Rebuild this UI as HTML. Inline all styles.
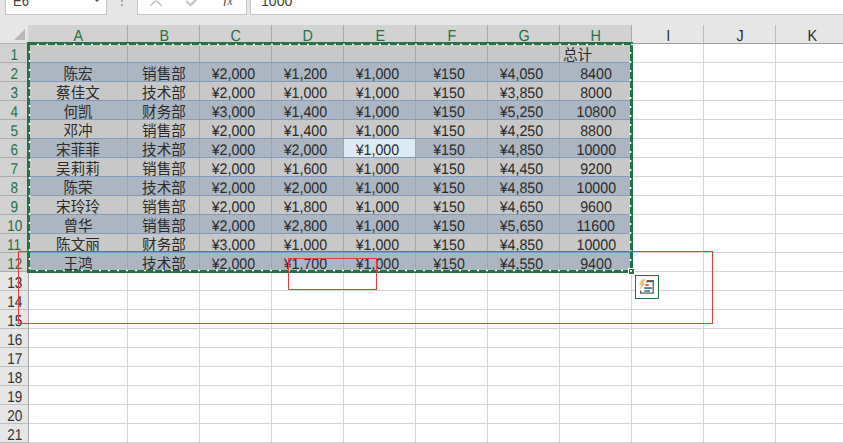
<!DOCTYPE html>
<html lang="zh"><head><meta charset="utf-8"><title>Excel</title>
<style>
html,body{margin:0;padding:0}
body{width:843px;height:443px;overflow:hidden;position:relative;background:#fff;font-family:"Liberation Sans","Noto Sans CJK SC",sans-serif;color:#222}
div{position:absolute;box-sizing:border-box}
.top{left:0;top:0;width:843px;height:25px;background:#e6e6e6}
.box{background:#fff;border:1px solid #c4c4c4;border-top:none}
.ch{top:25px;height:19px;background:#e6e6e6;border-right:1px solid #bdbdbd;border-bottom:1px solid #9f9f9f;text-align:center;font-size:16px;line-height:23px;padding-left:1px;color:#2e2e2e;text-rendering:geometricPrecision;overflow:hidden}
.ch.s{background:#d2d2d2;color:#217346;border-right-color:#ababab}
.rh{left:0;width:29px;height:19px;padding-left:1px;background:#e6e6e6;border-bottom:1px solid #bdbdbd;border-right:1px solid #a6a6a6;text-align:center;font-size:15.6px;line-height:23.5px;color:#333;overflow:hidden;text-rendering:geometricPrecision}
.rh.s{background:#d2d2d2;color:#217346;border-bottom-color:#ababab}
.c{height:19px;text-align:center;font-size:14.6px;line-height:23.5px;white-space:nowrap;overflow:hidden;color:#2b2b2b}
.c.num{line-height:23.5px}
.n{display:inline-block;font-size:15.3px;transform:scaleX(.93);text-rendering:geometricPrecision}
.ch span,.rh span{display:inline-block}
.ch span{transform:scaleX(.9)}
.rh span{transform:scaleX(.87)}
.gv{top:44px;width:1px;height:399px;background:#d4d4d4}
.gh{left:28px;height:1px;width:815px;background:#d4d4d4}
</style></head><body>

<div class="gv" style="left:127px"></div>
<div class="gv" style="left:199px"></div>
<div class="gv" style="left:271px"></div>
<div class="gv" style="left:343px"></div>
<div class="gv" style="left:415px"></div>
<div class="gv" style="left:487px"></div>
<div class="gv" style="left:559px"></div>
<div class="gv" style="left:631px"></div>
<div class="gv" style="left:703px"></div>
<div class="gv" style="left:775px"></div>
<div class="gh" style="top:62px"></div>
<div class="gh" style="top:81px"></div>
<div class="gh" style="top:100px"></div>
<div class="gh" style="top:119px"></div>
<div class="gh" style="top:138px"></div>
<div class="gh" style="top:157px"></div>
<div class="gh" style="top:176px"></div>
<div class="gh" style="top:195px"></div>
<div class="gh" style="top:214px"></div>
<div class="gh" style="top:233px"></div>
<div class="gh" style="top:252px"></div>
<div class="gh" style="top:271px"></div>
<div class="gh" style="top:290px"></div>
<div class="gh" style="top:309px"></div>
<div class="gh" style="top:328px"></div>
<div class="gh" style="top:347px"></div>
<div class="gh" style="top:366px"></div>
<div class="gh" style="top:385px"></div>
<div class="gh" style="top:404px"></div>
<div class="gh" style="top:423px"></div>
<div class="gh" style="top:442px"></div>
<div class="gh" style="top:461px"></div>
<div style="left:28px;top:44px;width:604px;height:19px;background:#c8c8c8"></div>
<div style="left:28px;top:63px;width:604px;height:19px;background:#abb6c2"></div>
<div style="left:28px;top:82px;width:604px;height:19px;background:#c8c8c8"></div>
<div style="left:28px;top:101px;width:604px;height:19px;background:#abb6c2"></div>
<div style="left:28px;top:120px;width:604px;height:19px;background:#c8c8c8"></div>
<div style="left:28px;top:139px;width:604px;height:19px;background:#abb6c2"></div>
<div style="left:28px;top:158px;width:604px;height:19px;background:#c8c8c8"></div>
<div style="left:28px;top:177px;width:604px;height:19px;background:#abb6c2"></div>
<div style="left:28px;top:196px;width:604px;height:19px;background:#c8c8c8"></div>
<div style="left:28px;top:215px;width:604px;height:19px;background:#abb6c2"></div>
<div style="left:28px;top:234px;width:604px;height:19px;background:#c8c8c8"></div>
<div style="left:28px;top:253px;width:604px;height:19px;background:#abb6c2"></div>
<div class="c" style="left:28px;top:44px;width:100px;"></div>
<div class="c" style="left:128px;top:44px;width:72px;"></div>
<div class="c" style="left:200px;top:44px;width:72px;"></div>
<div class="c" style="left:272px;top:44px;width:72px;"></div>
<div class="c" style="left:344px;top:44px;width:72px;"></div>
<div class="c" style="left:416px;top:44px;width:72px;"></div>
<div class="c" style="left:488px;top:44px;width:72px;"></div>
<div class="c" style="left:560px;top:44px;width:72px;text-align:left;padding-left:3px;">总计</div>
<div class="c" style="left:28px;top:63px;width:100px;">陈宏</div>
<div class="c" style="left:128px;top:63px;width:72px;">销售部</div>
<div class="c num" style="left:200px;top:63px;width:72px;padding-right:6px;"><span class="n">¥2,000</span></div>
<div class="c num" style="left:272px;top:63px;width:72px;padding-right:6px;"><span class="n">¥1,200</span></div>
<div class="c num" style="left:344px;top:63px;width:72px;padding-right:6px;"><span class="n">¥1,000</span></div>
<div class="c num" style="left:416px;top:63px;width:72px;padding-right:6px;"><span class="n">¥150</span></div>
<div class="c num" style="left:488px;top:63px;width:72px;padding-right:6px;"><span class="n">¥4,050</span></div>
<div class="c num" style="left:560px;top:63px;width:72px;"><span class="n">8400</span></div>
<div class="c" style="left:28px;top:82px;width:100px;">蔡佳文</div>
<div class="c" style="left:128px;top:82px;width:72px;">技术部</div>
<div class="c num" style="left:200px;top:82px;width:72px;padding-right:6px;"><span class="n">¥2,000</span></div>
<div class="c num" style="left:272px;top:82px;width:72px;padding-right:6px;"><span class="n">¥1,000</span></div>
<div class="c num" style="left:344px;top:82px;width:72px;padding-right:6px;"><span class="n">¥1,000</span></div>
<div class="c num" style="left:416px;top:82px;width:72px;padding-right:6px;"><span class="n">¥150</span></div>
<div class="c num" style="left:488px;top:82px;width:72px;padding-right:6px;"><span class="n">¥3,850</span></div>
<div class="c num" style="left:560px;top:82px;width:72px;"><span class="n">8000</span></div>
<div class="c" style="left:28px;top:101px;width:100px;">何凯</div>
<div class="c" style="left:128px;top:101px;width:72px;">财务部</div>
<div class="c num" style="left:200px;top:101px;width:72px;padding-right:6px;"><span class="n">¥3,000</span></div>
<div class="c num" style="left:272px;top:101px;width:72px;padding-right:6px;"><span class="n">¥1,400</span></div>
<div class="c num" style="left:344px;top:101px;width:72px;padding-right:6px;"><span class="n">¥1,000</span></div>
<div class="c num" style="left:416px;top:101px;width:72px;padding-right:6px;"><span class="n">¥150</span></div>
<div class="c num" style="left:488px;top:101px;width:72px;padding-right:6px;"><span class="n">¥5,250</span></div>
<div class="c num" style="left:560px;top:101px;width:72px;"><span class="n">10800</span></div>
<div class="c" style="left:28px;top:120px;width:100px;">邓冲</div>
<div class="c" style="left:128px;top:120px;width:72px;">销售部</div>
<div class="c num" style="left:200px;top:120px;width:72px;padding-right:6px;"><span class="n">¥2,000</span></div>
<div class="c num" style="left:272px;top:120px;width:72px;padding-right:6px;"><span class="n">¥1,400</span></div>
<div class="c num" style="left:344px;top:120px;width:72px;padding-right:6px;"><span class="n">¥1,000</span></div>
<div class="c num" style="left:416px;top:120px;width:72px;padding-right:6px;"><span class="n">¥150</span></div>
<div class="c num" style="left:488px;top:120px;width:72px;padding-right:6px;"><span class="n">¥4,250</span></div>
<div class="c num" style="left:560px;top:120px;width:72px;"><span class="n">8800</span></div>
<div class="c" style="left:28px;top:139px;width:100px;">宋菲菲</div>
<div class="c" style="left:128px;top:139px;width:72px;">技术部</div>
<div class="c num" style="left:200px;top:139px;width:72px;padding-right:6px;"><span class="n">¥2,000</span></div>
<div class="c num" style="left:272px;top:139px;width:72px;padding-right:6px;"><span class="n">¥2,000</span></div>
<div class="c num" style="left:344px;top:139px;width:72px;background:#ddebf7;padding-right:6px;"><span class="n">¥1,000</span></div>
<div class="c num" style="left:416px;top:139px;width:72px;padding-right:6px;"><span class="n">¥150</span></div>
<div class="c num" style="left:488px;top:139px;width:72px;padding-right:6px;"><span class="n">¥4,850</span></div>
<div class="c num" style="left:560px;top:139px;width:72px;"><span class="n">10000</span></div>
<div class="c" style="left:28px;top:158px;width:100px;">吴莉莉</div>
<div class="c" style="left:128px;top:158px;width:72px;">销售部</div>
<div class="c num" style="left:200px;top:158px;width:72px;padding-right:6px;"><span class="n">¥2,000</span></div>
<div class="c num" style="left:272px;top:158px;width:72px;padding-right:6px;"><span class="n">¥1,600</span></div>
<div class="c num" style="left:344px;top:158px;width:72px;padding-right:6px;"><span class="n">¥1,000</span></div>
<div class="c num" style="left:416px;top:158px;width:72px;padding-right:6px;"><span class="n">¥150</span></div>
<div class="c num" style="left:488px;top:158px;width:72px;padding-right:6px;"><span class="n">¥4,450</span></div>
<div class="c num" style="left:560px;top:158px;width:72px;"><span class="n">9200</span></div>
<div class="c" style="left:28px;top:177px;width:100px;">陈荣</div>
<div class="c" style="left:128px;top:177px;width:72px;">技术部</div>
<div class="c num" style="left:200px;top:177px;width:72px;padding-right:6px;"><span class="n">¥2,000</span></div>
<div class="c num" style="left:272px;top:177px;width:72px;padding-right:6px;"><span class="n">¥2,000</span></div>
<div class="c num" style="left:344px;top:177px;width:72px;padding-right:6px;"><span class="n">¥1,000</span></div>
<div class="c num" style="left:416px;top:177px;width:72px;padding-right:6px;"><span class="n">¥150</span></div>
<div class="c num" style="left:488px;top:177px;width:72px;padding-right:6px;"><span class="n">¥4,850</span></div>
<div class="c num" style="left:560px;top:177px;width:72px;"><span class="n">10000</span></div>
<div class="c" style="left:28px;top:196px;width:100px;">宋玲玲</div>
<div class="c" style="left:128px;top:196px;width:72px;">销售部</div>
<div class="c num" style="left:200px;top:196px;width:72px;padding-right:6px;"><span class="n">¥2,000</span></div>
<div class="c num" style="left:272px;top:196px;width:72px;padding-right:6px;"><span class="n">¥1,800</span></div>
<div class="c num" style="left:344px;top:196px;width:72px;padding-right:6px;"><span class="n">¥1,000</span></div>
<div class="c num" style="left:416px;top:196px;width:72px;padding-right:6px;"><span class="n">¥150</span></div>
<div class="c num" style="left:488px;top:196px;width:72px;padding-right:6px;"><span class="n">¥4,650</span></div>
<div class="c num" style="left:560px;top:196px;width:72px;"><span class="n">9600</span></div>
<div class="c" style="left:28px;top:215px;width:100px;">曾华</div>
<div class="c" style="left:128px;top:215px;width:72px;">销售部</div>
<div class="c num" style="left:200px;top:215px;width:72px;padding-right:6px;"><span class="n">¥2,000</span></div>
<div class="c num" style="left:272px;top:215px;width:72px;padding-right:6px;"><span class="n">¥2,800</span></div>
<div class="c num" style="left:344px;top:215px;width:72px;padding-right:6px;"><span class="n">¥1,000</span></div>
<div class="c num" style="left:416px;top:215px;width:72px;padding-right:6px;"><span class="n">¥150</span></div>
<div class="c num" style="left:488px;top:215px;width:72px;padding-right:6px;"><span class="n">¥5,650</span></div>
<div class="c num" style="left:560px;top:215px;width:72px;"><span class="n">11600</span></div>
<div class="c" style="left:28px;top:234px;width:100px;">陈文丽</div>
<div class="c" style="left:128px;top:234px;width:72px;">财务部</div>
<div class="c num" style="left:200px;top:234px;width:72px;padding-right:6px;"><span class="n">¥3,000</span></div>
<div class="c num" style="left:272px;top:234px;width:72px;padding-right:6px;"><span class="n">¥1,000</span></div>
<div class="c num" style="left:344px;top:234px;width:72px;padding-right:6px;"><span class="n">¥1,000</span></div>
<div class="c num" style="left:416px;top:234px;width:72px;padding-right:6px;"><span class="n">¥150</span></div>
<div class="c num" style="left:488px;top:234px;width:72px;padding-right:6px;"><span class="n">¥4,850</span></div>
<div class="c num" style="left:560px;top:234px;width:72px;"><span class="n">10000</span></div>
<div class="c" style="left:28px;top:253px;width:100px;">王鸿</div>
<div class="c" style="left:128px;top:253px;width:72px;">技术部</div>
<div class="c num" style="left:200px;top:253px;width:72px;padding-right:6px;"><span class="n">¥2,000</span></div>
<div class="c num" style="left:272px;top:253px;width:72px;padding-right:6px;"><span class="n">¥1,700</span></div>
<div class="c num" style="left:344px;top:253px;width:72px;padding-right:6px;"><span class="n">¥1,000</span></div>
<div class="c num" style="left:416px;top:253px;width:72px;padding-right:6px;"><span class="n">¥150</span></div>
<div class="c num" style="left:488px;top:253px;width:72px;padding-right:6px;"><span class="n">¥4,550</span></div>
<div class="c num" style="left:560px;top:253px;width:72px;"><span class="n">9400</span></div>
<div style="left:127px;top:44px;width:1px;height:228px;background:#a8a8a8"></div>
<div style="left:127px;top:63px;width:1px;height:19px;background:#93a6c2"></div>
<div style="left:127px;top:101px;width:1px;height:19px;background:#93a6c2"></div>
<div style="left:127px;top:139px;width:1px;height:19px;background:#93a6c2"></div>
<div style="left:127px;top:177px;width:1px;height:19px;background:#93a6c2"></div>
<div style="left:127px;top:215px;width:1px;height:19px;background:#93a6c2"></div>
<div style="left:127px;top:253px;width:1px;height:19px;background:#93a6c2"></div>
<div style="left:199px;top:44px;width:1px;height:228px;background:#a8a8a8"></div>
<div style="left:199px;top:63px;width:1px;height:19px;background:#93a6c2"></div>
<div style="left:199px;top:101px;width:1px;height:19px;background:#93a6c2"></div>
<div style="left:199px;top:139px;width:1px;height:19px;background:#93a6c2"></div>
<div style="left:199px;top:177px;width:1px;height:19px;background:#93a6c2"></div>
<div style="left:199px;top:215px;width:1px;height:19px;background:#93a6c2"></div>
<div style="left:199px;top:253px;width:1px;height:19px;background:#93a6c2"></div>
<div style="left:271px;top:44px;width:1px;height:228px;background:#a8a8a8"></div>
<div style="left:271px;top:63px;width:1px;height:19px;background:#93a6c2"></div>
<div style="left:271px;top:101px;width:1px;height:19px;background:#93a6c2"></div>
<div style="left:271px;top:139px;width:1px;height:19px;background:#93a6c2"></div>
<div style="left:271px;top:177px;width:1px;height:19px;background:#93a6c2"></div>
<div style="left:271px;top:215px;width:1px;height:19px;background:#93a6c2"></div>
<div style="left:271px;top:253px;width:1px;height:19px;background:#93a6c2"></div>
<div style="left:343px;top:44px;width:1px;height:228px;background:#a8a8a8"></div>
<div style="left:343px;top:63px;width:1px;height:19px;background:#93a6c2"></div>
<div style="left:343px;top:101px;width:1px;height:19px;background:#93a6c2"></div>
<div style="left:343px;top:139px;width:1px;height:19px;background:#93a6c2"></div>
<div style="left:343px;top:177px;width:1px;height:19px;background:#93a6c2"></div>
<div style="left:343px;top:215px;width:1px;height:19px;background:#93a6c2"></div>
<div style="left:343px;top:253px;width:1px;height:19px;background:#93a6c2"></div>
<div style="left:415px;top:44px;width:1px;height:228px;background:#a8a8a8"></div>
<div style="left:415px;top:63px;width:1px;height:19px;background:#93a6c2"></div>
<div style="left:415px;top:101px;width:1px;height:19px;background:#93a6c2"></div>
<div style="left:415px;top:139px;width:1px;height:19px;background:#93a6c2"></div>
<div style="left:415px;top:177px;width:1px;height:19px;background:#93a6c2"></div>
<div style="left:415px;top:215px;width:1px;height:19px;background:#93a6c2"></div>
<div style="left:415px;top:253px;width:1px;height:19px;background:#93a6c2"></div>
<div style="left:487px;top:44px;width:1px;height:228px;background:#a8a8a8"></div>
<div style="left:487px;top:63px;width:1px;height:19px;background:#93a6c2"></div>
<div style="left:487px;top:101px;width:1px;height:19px;background:#93a6c2"></div>
<div style="left:487px;top:139px;width:1px;height:19px;background:#93a6c2"></div>
<div style="left:487px;top:177px;width:1px;height:19px;background:#93a6c2"></div>
<div style="left:487px;top:215px;width:1px;height:19px;background:#93a6c2"></div>
<div style="left:487px;top:253px;width:1px;height:19px;background:#93a6c2"></div>
<div style="left:559px;top:44px;width:1px;height:228px;background:#a8a8a8"></div>
<div style="left:559px;top:63px;width:1px;height:19px;background:#93a6c2"></div>
<div style="left:559px;top:101px;width:1px;height:19px;background:#93a6c2"></div>
<div style="left:559px;top:139px;width:1px;height:19px;background:#93a6c2"></div>
<div style="left:559px;top:177px;width:1px;height:19px;background:#93a6c2"></div>
<div style="left:559px;top:215px;width:1px;height:19px;background:#93a6c2"></div>
<div style="left:559px;top:253px;width:1px;height:19px;background:#93a6c2"></div>
<div style="left:28px;top:62px;width:604px;height:1px;background:#7f9dc4"></div>
<div style="left:28px;top:81px;width:604px;height:1px;background:#7f9dc4"></div>
<div style="left:28px;top:100px;width:604px;height:1px;background:#7f9dc4"></div>
<div style="left:28px;top:119px;width:604px;height:1px;background:#7f9dc4"></div>
<div style="left:28px;top:138px;width:604px;height:1px;background:#7f9dc4"></div>
<div style="left:28px;top:157px;width:604px;height:1px;background:#7f9dc4"></div>
<div style="left:28px;top:176px;width:604px;height:1px;background:#7f9dc4"></div>
<div style="left:28px;top:195px;width:604px;height:1px;background:#7f9dc4"></div>
<div style="left:28px;top:214px;width:604px;height:1px;background:#7f9dc4"></div>
<div style="left:28px;top:233px;width:604px;height:1px;background:#7f9dc4"></div>
<div style="left:28px;top:252px;width:604px;height:1px;background:#7f9dc4"></div>
<div class="top"></div>
<div class="box" style="left:5px;top:0;width:102px;height:15px"></div>
<div style="left:13px;top:-8px;font-size:15px;line-height:17px;color:#3c3c3c;transform:scaleX(.87);transform-origin:0 0">E6</div>
<div style="left:94px;top:-1px;width:0;height:0;border-left:3px solid transparent;border-right:3px solid transparent;border-top:3px solid #555"></div>
<div style="left:121px;top:0;width:2px;height:2px;background:#aaa"></div><div style="left:121px;top:4px;width:2px;height:2px;background:#aaa"></div>
<div class="box" style="left:137px;top:0;width:110px;height:15px"></div>
<div class="box" style="left:250px;top:0;width:600px;height:15px"></div>
<div style="left:261px;top:-8px;font-size:15px;line-height:17px;color:#3c3c3c;transform:scaleX(.94);transform-origin:0 0">1000</div>
<svg style="position:absolute;left:137px;top:0" width="110" height="15" viewBox="0 0 110 15"><path d="M13.5 5.7 L25 -5.8 M24.5 5.7 L13 -5.8" stroke="#c2c2c2" stroke-width="1.5" fill="none"/><path d="M49.3 1.2 L53.6 5.2 L61.5 -3" stroke="#c6c6c6" stroke-width="2.3" fill="none"/><text x="86.5" y="3.2" font-family="Liberation Serif,serif" font-style="italic" font-size="14" fill="#4a4a4a">f</text><text x="90.5" y="5.2" font-family="Liberation Serif,serif" font-style="italic" font-size="11.5" fill="#4a4a4a">x</text></svg>
<div style="left:0;top:25px;width:29px;height:19px;background:#e6e6e6;border-right:1px solid #ababab;border-bottom:1px solid #b0b0b0"></div>
<div style="left:14px;top:29px;width:0;height:0;border-left:11px solid transparent;border-bottom:11px solid #b8b8b8"></div>
<div class="ch s" style="left:28px;width:100px"><span>A</span></div>
<div class="ch s" style="left:128px;width:72px"><span>B</span></div>
<div class="ch s" style="left:200px;width:72px"><span>C</span></div>
<div class="ch s" style="left:272px;width:72px"><span>D</span></div>
<div class="ch s" style="left:344px;width:72px"><span>E</span></div>
<div class="ch s" style="left:416px;width:72px"><span>F</span></div>
<div class="ch s" style="left:488px;width:72px"><span>G</span></div>
<div class="ch s" style="left:560px;width:72px"><span>H</span></div>
<div class="ch" style="left:632px;width:72px"><span>I</span></div>
<div class="ch" style="left:704px;width:72px"><span>J</span></div>
<div class="ch" style="left:776px;width:72px"><span>K</span></div>
<div class="rh s" style="top:44px"><span>1</span></div>
<div class="rh s" style="top:63px"><span>2</span></div>
<div class="rh s" style="top:82px"><span>3</span></div>
<div class="rh s" style="top:101px"><span>4</span></div>
<div class="rh s" style="top:120px"><span>5</span></div>
<div class="rh s" style="top:139px"><span>6</span></div>
<div class="rh s" style="top:158px"><span>7</span></div>
<div class="rh s" style="top:177px"><span>8</span></div>
<div class="rh s" style="top:196px"><span>9</span></div>
<div class="rh s" style="top:215px"><span>10</span></div>
<div class="rh s" style="top:234px"><span>11</span></div>
<div class="rh s" style="top:253px"><span>12</span></div>
<div class="rh" style="top:272px"><span>13</span></div>
<div class="rh" style="top:291px"><span>14</span></div>
<div class="rh" style="top:310px"><span>15</span></div>
<div class="rh" style="top:329px"><span>16</span></div>
<div class="rh" style="top:348px"><span>17</span></div>
<div class="rh" style="top:367px"><span>18</span></div>
<div class="rh" style="top:386px"><span>19</span></div>
<div class="rh" style="top:405px"><span>20</span></div>
<div class="rh" style="top:424px"><span>21</span></div>
<div class="rh" style="top:443px"><span>22</span></div>
<div style="left:27px;top:42px;width:606px;height:231px;border:3px solid #217346"></div>
<svg style="position:absolute;left:0;top:0" width="843" height="443"><path d="M37 44.5 H633" stroke="#fff" stroke-width="1.6" stroke-dasharray="2 7" fill="none"/><path d="M623 270.5 H30" stroke="#fff" stroke-width="1.6" stroke-dasharray="2 7" stroke-dashoffset="0" fill="none" transform="translate(0,0)"/><path d="M29.5 51 V270" stroke="#fff" stroke-width="1.6" stroke-dasharray="2 7" fill="none"/><path d="M630.5 52 V269" stroke="#fff" stroke-width="1.6" stroke-dasharray="2 7" fill="none"/><rect x="628.5" y="268.5" width="6" height="6" fill="#217346" stroke="#fff" stroke-width="1"/><rect x="630" y="270" width="2" height="1.8" fill="#fff"/></svg>
<div style="left:18px;top:251px;width:695px;height:73px;border:1px solid #f23a3a"></div>
<div style="left:288px;top:258px;width:89px;height:32px;border:1px solid #f23a3a"></div>
<div style="left:635px;top:275px;width:24px;height:24px;border:1px solid #217346;background:#fff"></div>
<svg style="position:absolute;left:635px;top:275px" width="24" height="24" viewBox="0 0 24 24"><path d="M18.2 6 V18.2 H5.6 V15.6" fill="none" stroke="#5c5c5c" stroke-width="1.3"/><path d="M10.6 7.3 L12.2 5 H18.85 V7.3 Z" fill="#5c5c5c"/><path d="M6.6 4.2 H10.8 L8.4 8.2 H10.4 L4.2 15.4 L6.2 10.2 H4 Z" fill="#f0c077"/><rect x="10.4" y="9.2" width="3.4" height="1.6" fill="#d8402c"/><rect x="9.2" y="12.2" width="7.7" height="1.7" fill="#3c6db3"/><rect x="9.2" y="15.1" width="5.8" height="1.8" fill="#3f9b7e"/></svg>
</body></html>
